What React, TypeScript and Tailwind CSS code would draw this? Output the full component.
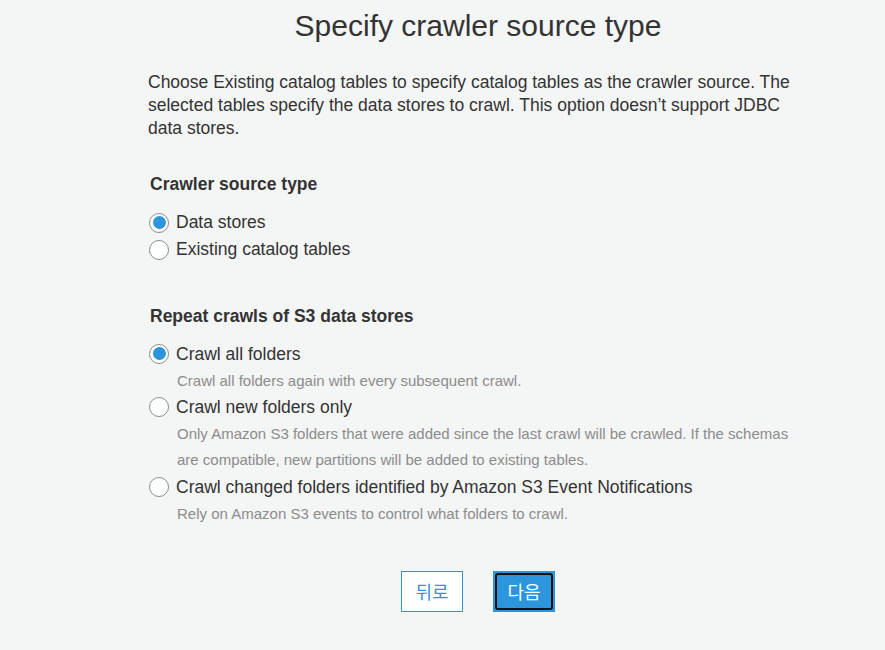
import { useState } from "react";

type Option = { id: string; label: string; hint?: string[] };

const SOURCE_TYPES: Option[] = [
  { id: "stores", label: "Data stores" },
  { id: "catalog", label: "Existing catalog tables" },
];

const REPEAT_OPTIONS: Option[] = [
  {
    id: "all",
    label: "Crawl all folders",
    hint: ["Crawl all folders again with every subsequent crawl."],
  },
  {
    id: "new",
    label: "Crawl new folders only",
    hint: [
      "Only Amazon S3 folders that were added since the last crawl will be crawled. If the schemas",
      "are compatible, new partitions will be added to existing tables.",
    ],
  },
  {
    id: "events",
    label: "Crawl changed folders identified by Amazon S3 Event Notifications",
    hint: ["Rely on Amazon S3 events to control what folders to crawl."],
  },
];

function Radio({ checked }: { checked: boolean }) {
  return (
    <span className="flex h-[20px] w-[20px] flex-shrink-0 items-center justify-center rounded-full border border-[#8d8d8d] bg-white">
      {checked && <span className="h-[13px] w-[13px] rounded-full bg-[#2d95dc]" />}
    </span>
  );
}

function RadioGroup({
  options,
  value,
  onChange,
  tall,
}: {
  options: Option[];
  value: string;
  onChange: (v: string) => void;
  tall?: boolean;
}) {
  return (
    <div className="flex flex-col">
      {options.map((opt) => (
        <div key={opt.id}>
          <label
            className={`flex cursor-pointer items-center gap-[7px] pl-[1px] text-[17.5px] text-[#333] ${
              tall ? "h-[27.5px]" : "h-[27px]"
            }`}
            onClick={() => onChange(opt.id)}
          >
            <Radio checked={value === opt.id} />
            <span>{opt.label}</span>
          </label>
          {opt.hint && (
            <div className="pl-[29px] text-[15px] leading-[26px] text-[#8c8c8c]">
              {opt.hint.map((line) => (
                <div key={line}>{line}</div>
              ))}
            </div>
          )}
        </div>
      ))}
    </div>
  );
}

export default function App() {
  const [source, setSource] = useState("stores");
  const [repeat, setRepeat] = useState("all");

  return (
    <div className="min-h-[650px] bg-[#f4f5f5] font-['Liberation_Sans',Arial,'Noto_Sans_CJK_KR',sans-serif] text-[#333]">
      <div className="ml-[148px] w-[660px] pt-[6px]">
        <h1 className="text-center text-[30px] leading-[40px]">Specify crawler source type</h1>

        <p className="mt-[25px] text-[17.5px] leading-[23px]">
          Choose Existing catalog tables to specify catalog tables as the crawler source. The
          selected tables specify the data stores to crawl. This option doesn’t support JDBC
          data stores.
        </p>

        {/* Crawler source type */}
        <h2 className="mt-[32px] pl-[2px] text-[17.5px] font-bold leading-[24px]">Crawler source type</h2>
        <div className="mt-[13px]">
          <RadioGroup options={SOURCE_TYPES} value={source} onChange={setSource} />
        </div>

        {/* Repeat crawls */}
        <h2 className="mt-[41px] pl-[2px] text-[17.5px] font-bold leading-[24px]">
          Repeat crawls of S3 data stores
        </h2>
        <div className="mt-[12px]">
          <RadioGroup options={REPEAT_OPTIONS} value={repeat} onChange={setRepeat} tall />
        </div>

        <div className="mt-[44px] flex justify-center gap-[30px]">
          <button className="h-[41px] w-[62px] border border-[#2d95dc] bg-white font-['Noto_Sans_CJK_KR',sans-serif] text-[18px] text-[#3b8fd4]">
            뒤로
          </button>
          <button className="h-[41px] w-[62px] border border-[#2d95dc] bg-[#2d95dc] p-[1px]">
            <span className="flex h-full w-full items-center justify-center rounded-[3px] border-2 border-[#111] font-['Noto_Sans_CJK_KR',sans-serif] text-[18px] text-white">
              다음
            </span>
          </button>
        </div>
      </div>
    </div>
  );
}
